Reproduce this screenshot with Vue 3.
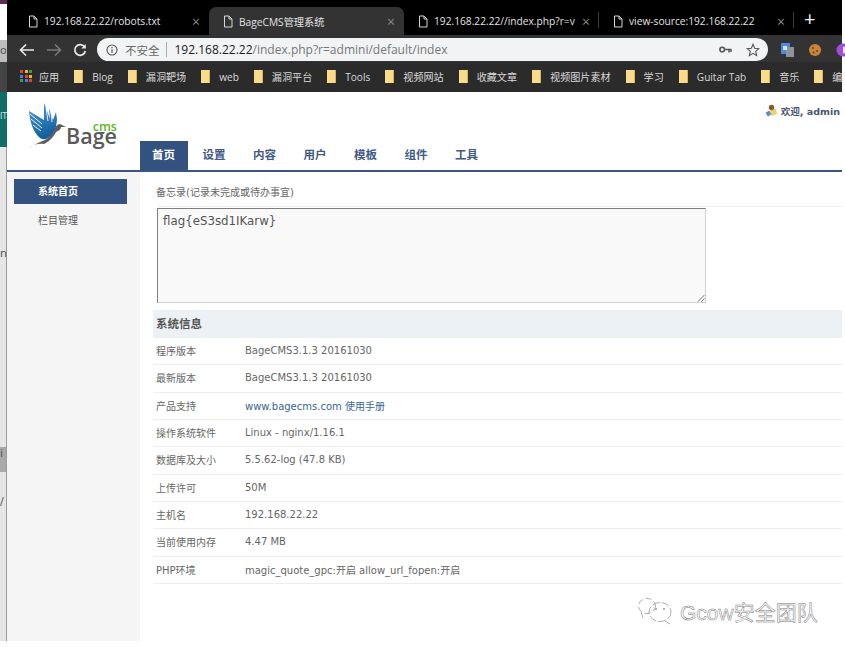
<template>
  <div class="shot">
    <!-- 左边露出的其他窗口 -->
    <div class="desk">
      <div class="desk-a"></div>
      <div class="desk-b"></div>
      <div class="desk-c">o</div>
      <div class="desk-d"></div>
      <div class="desk-e">IT</div>
      <div class="desk-f">
        <span class="desk-n">n</span>
        <span class="desk-g">i</span>
        <span class="desk-s">/</span>
      </div>
    </div>

    <div class="win">
      <!-- 标签栏 -->
      <div class="tabs">
        <div v-for="tab in tabs" :key="tab.title" class="tab" :class="{ active: tab.active }" :style="{ width: tab.width + 'px' }">
          <svg class="doc" width="12" height="13" viewBox="0 0 12 13">
            <path d="M2.5 1h4.5l3 3v8h-7.500z M7 1v3h3" fill="none" stroke="currentColor" stroke-width="1" />
          </svg>
          <span class="tab-title">{{ tab.title }}</span>
          <span class="tab-x">×</span>
        </div>
        <span class="plus">+</span>
      </div>

      <!-- 地址栏 -->
      <div class="toolbar">
        <svg class="nav-ico" width="16" height="14" viewBox="0 0 16 14"><path d="M15 7H2M7 1.500 1.500 7 7 12.500" fill="none" stroke="#e8eaed" stroke-width="1.600" /></svg>
        <svg class="nav-ico" width="16" height="14" viewBox="0 0 16 14"><path d="M1 7h13M9 1.500 14.500 7 9 12.500" fill="none" stroke="#77797c" stroke-width="1.600" /></svg>
        <svg class="nav-ico" width="14" height="14" viewBox="0 0 14 14"><path d="M11.500 4A5.300 5.300 0 1 0 12.300 8" fill="none" stroke="#e8eaed" stroke-width="1.700" /><path d="M12.800 1v4.500H8.300z" fill="#e8eaed" /></svg>
        <div class="omni">
          <svg width="12" height="12" viewBox="0 0 12 12"><circle cx="6" cy="6" r="5" fill="none" stroke="#555" stroke-width="1.100" /><path d="M6 5.200v3.600M6 3v1.200" stroke="#555" stroke-width="1.200" /></svg>
          <span class="insecure">不安全</span>
          <span class="sep"></span>
          <span class="url"><b>192.168.22.22</b>/index.php?r=admini/default/index</span>
          <svg class="key" width="13" height="8" viewBox="0 0 13 8"><circle cx="3.200" cy="3.500" r="2.300" fill="none" stroke="#555" stroke-width="1.600" /><path d="M5.500 3.500H12.500M10 3.500v3M12 3.500v2.500" stroke="#555" stroke-width="1.500" /></svg>
          <svg width="14" height="14" viewBox="0 0 14 14"><path d="M7 1.300 8.700 5.200 12.900 5.600 9.700 8.400 10.700 12.600 7 10.400 3.300 12.600 4.300 8.400 1.100 5.600 5.300 5.200z" fill="none" stroke="#555" stroke-width="1.100" /></svg>
        </div>
        <div class="exts">
          <svg width="14" height="14" viewBox="0 0 14 14"><rect x="1" y="0" width="9" height="11" fill="#4a8ae6" /><rect x="6" y="4" width="8" height="10" fill="#8d959c" /><rect x="3" y="3" width="4" height="4" fill="#d5e4fa" /></svg>
          <svg width="14" height="14" viewBox="0 0 14 14"><circle cx="7" cy="7" r="6" fill="#c9843a" /><circle cx="5" cy="5" r="1" fill="#6d421a" /><circle cx="9" cy="8" r="1" fill="#6d421a" /><circle cx="5.500" cy="9.500" r="1" fill="#6d421a" /></svg>
          <svg width="14" height="14" viewBox="0 0 14 14"><circle cx="7" cy="7" r="6.500" fill="#a14ee0" /><path d="M7 3.500a3.500 3.500 0 0 1 0 7z" fill="#f2e6fb" /></svg>
        </div>
      </div>

      <!-- 书签栏 -->
      <div class="bookmarks">
        <div class="bm">
          <span class="apps"><i v-for="c in appColors" :key="c.id" :style="{ background: c.color }"></i></span>
          <span>应用</span>
        </div>
        <div v-for="b in bookmarks" :key="b" class="bm">
          <span class="folder"></span>
          <span>{{ b }}</span>
        </div>
      </div>

      <!-- 后台页面 -->
      <div class="page">
        <div class="head">
          <div class="logo">
            <svg class="bird" width="40" height="50" viewBox="0 0 40 50">
              <defs>
                <linearGradient id="wing" x1="0" y1="0" x2="0.300" y2="1">
                  <stop offset="0" stop-color="#4b9bd8" />
                  <stop offset="1" stop-color="#14609f" />
                </linearGradient>
              </defs>
              <path d="M2 11C3 22 6 32 13 38C19 42 26 36 29 27L30 20L29 12L26 20L22 8L23 19L17 3L17 20Z" fill="url(#wing)" />
              <path d="M3 14 15 24M4 19 15 28M6 25 14 31M19 8 21 21M24 12 25 22" fill="none" stroke="#fff" stroke-width="0.900" />
              <path d="M1 49C6 44 12 43 17 44C23 41 27 36 29 32C32 31 34 29 34 27L39 27L33 24C30 24 29 27 28 28C26 35 20 40 13 42C8 44 4 47 1 49Z" fill="#5c5c5c" />
            </svg>
            <div class="brand">
              <span class="cms">cms</span>
              <span class="bage">Bage</span>
            </div>
          </div>
          <div class="head-right">
            <div class="welcome">
              <svg width="13" height="13" viewBox="0 0 13 13">
                <path d="M5 5h6l1 5-6 2z" fill="#f0cf6a" />
                <circle cx="6.500" cy="3.500" r="2.700" fill="#8a5a2e" />
                <path d="M0.500 9 4 6.500 6.500 10 3 12.800z" fill="#5d8fc9" />
              </svg>
              <span>欢迎, <span class="admin">admin</span></span>
            </div>
            <div class="nav">
              <a v-for="(n, i) in navs" :key="n" class="nav-item" :class="{ on: i === 0 }">{{ n }}</a>
            </div>
          </div>
        </div>

        <div class="body">
          <div class="side">
            <div class="side-item on">系统首页</div>
            <div class="side-item">栏目管理</div>
          </div>
          <div class="main">
            <div class="memo-label">备忘录(记录未完成或待办事宜)</div>
            <div class="memo-line"></div>
            <div class="memo">flag{eS3sd1IKarw}
              <svg class="grip" width="8" height="8" viewBox="0 0 8 8"><path d="M7.500 1 1 7.500M7.500 4.500 4.500 7.500" stroke="#777" stroke-width="1" /></svg>
            </div>
            <div class="info-title">系统信息</div>
            <div v-for="row in rows" :key="row.label" class="info-row">
              <span class="info-label">{{ row.label }}</span>
              <span class="info-value" :class="{ link: row.link }">{{ row.value }}</span>
            </div>
          </div>
        </div>
      </div>

      <!-- 水印 -->
      <div class="mark">
        <svg width="36" height="28" viewBox="0 0 36 28">
          <g fill="none" stroke="#999" stroke-width="0.800">
            <ellipse cx="10" cy="9" rx="8.500" ry="7.500" stroke-dasharray="6 3" />
            <ellipse cx="23" cy="15" rx="11" ry="9.500" stroke-dasharray="8 2" />
            <path d="M4 15 6 21M28 24 33 27" />
          </g>
          <circle cx="19" cy="12" r="1" fill="#999" />
          <circle cx="27" cy="12" r="1" fill="#999" />
        </svg>
        <span>Gcow安全团队</span>
      </div>
    </div>
    <div class="edge"></div>
  </div>
</template>

<script setup>
const tabs = [
  { title: '192.168.22.22/robots.txt', width: 195 },
  { title: 'BageCMS管理系统', width: 195, active: true },
  { title: '192.168.22.22//index.php?r=v', width: 195 },
  { title: 'view-source:192.168.22.22', width: 195 }
]

const appColors = [
  '#e0452f', '#f2b632', '#3f9b4a',
  '#4a7fe0', '#e0452f', '#f2b632',
  '#3f9b4a', '#4a7fe0', '#e0452f'
].map((color, id) => ({ id, color }))

const bookmarks = ['Blog', '漏洞靶场', 'web', '漏洞平台', 'Tools', '视频网站', '收藏文章', '视频图片素材', '学习', 'Guitar Tab', '音乐', '编']

const navs = ['首页', '设置', '内容', '用户', '模板', '组件', '工具']

const rows = [
  { label: '程序版本', value: 'BageCMS3.1.3 20161030' },
  { label: '最新版本', value: 'BageCMS3.1.3 20161030' },
  { label: '产品支持', value: 'www.bagecms.com 使用手册', link: true },
  { label: '操作系统软件', value: 'Linux - nginx/1.16.1' },
  { label: '数据库及大小', value: '5.5.62-log (47.8 KB)' },
  { label: '上传许可', value: '50M' },
  { label: '主机名', value: '192.168.22.22' },
  { label: '当前使用内存', value: '4.47 MB' },
  { label: 'PHP环境', value: 'magic_quote_gpc:开启 allow_url_fopen:开启' }
]
</script>

<style>
html, body {
  margin: 0;
  background: #fff;
}
</style>

<style scoped>
.shot {
  display: flex;
  width: 845px;
  height: 647px;
  overflow: hidden;
  background: #fff;
  font-family: "DejaVu Sans", "Noto Sans CJK SC", sans-serif;
}

/* 左边缘 */
.desk {
  width: 7px;
  height: 641px;
  flex: none;
  display: flex;
  flex-direction: column;
  overflow: hidden;
  font-size: 11px;
  color: #555;
}
.desk-a { height: 4px; background: #5a2d4d; }
.desk-b { height: 36px; background: #fff; }
.desk-c { height: 22px; background: #bdbdbd; line-height: 22px; }
.desk-d { height: 30px; background: #444; }
.desk-e { height: 55px; background: #0f6f68; color: #cfe5e2; font-size: 8px; line-height: 50px; }
.desk-f {
  flex: 1;
  position: relative;
  background: #e6e6e6;
  border-right: 1px solid #9a9a9a;
}
.desk-n { position: absolute; left: 0; top: 100px; }
.desk-g {
  position: absolute;
  left: 0;
  top: 300px;
  width: 6px;
  height: 25px;
  background: #a9a9a9;
}
.desk-s { position: absolute; left: 0; top: 348px; }

.win {
  position: relative;
  width: 835px;
  height: 641px;
  flex: none;
  display: flex;
  flex-direction: column;
}
.edge {
  flex: 1;
  background: #fff;
}

/* 标签栏 */
.tabs {
  height: 35px;
  padding-top: 7px;
  box-sizing: border-box;
  flex: none;
  background: #000;
  display: flex;
  padding-left: 7px;
  font-family: "Open Sans", "Noto Sans CJK SC", sans-serif;
  font-size: 10.200px;
  color: #e3e3e3;
}
.tab {
  display: flex;
  align-items: center;
  box-sizing: border-box;
  padding: 0 7px 0 7px;
  flex: none;
  position: relative;
}
.tab.active {
  background: #333;
  border-radius: 7px 7px 0 0;
}
.tab:nth-child(3)::after,
.tab:nth-child(4)::after {
  content: "";
  position: absolute;
  right: 0;
  top: 5px;
  bottom: 7px;
  width: 1px;
  background: #3c3c3c;
}
.doc {
  flex: none;
  margin-left: 6px;
  color: #d8d8d8;
}
.tab-title {
  margin-left: 5px;
  flex: 1;
  overflow: hidden;
  white-space: nowrap;
}
.tab-x {
  flex: none;
  width: 10px;
  font-size: 14px;
  color: #8a8a8a;
}
.plus {
  margin-left: 10px;
  font-size: 20px;
  line-height: 24px;
  color: #f2f2f2;
}

/* 地址栏 */
.toolbar {
  height: 27px;
  flex: none;
  background: #333;
  display: flex;
  align-items: center;
  padding: 2px 0 0 12px;
  box-sizing: border-box;
  gap: 11px;
}
.nav-ico {
  flex: none;
}
.omni {
  width: 671px;
  height: 23px;
  flex: none;
  margin-left: -1px;
  border-radius: 12px;
  background: #f1f3f4;
  display: flex;
  align-items: center;
  padding: 0 8px 0 9px;
  box-sizing: border-box;
  font-family: "Open Sans", "Noto Sans CJK SC", sans-serif;
  color: #777;
}
.insecure {
  margin-left: 7px;
  font-size: 11.500px;
  color: #666;
}
.sep {
  width: 1px;
  height: 15px;
  margin: 0 8px 0 6px;
  background: #aaa;
}
.url {
  flex: 1;
  font-size: 12px;
  white-space: nowrap;
}
.url b {
  font-weight: 400;
  color: #222;
}
.key {
  margin-right: 14px;
}
.exts {
  display: flex;
  gap: 14px;
  margin-left: 1px;
}

/* 书签栏 */
.bookmarks {
  height: 30px;
  flex: none;
  background: #2b2b2b;
  display: flex;
  align-items: center;
  padding: 0 0 1px 14px;
  box-sizing: border-box;
  gap: 15px;
  overflow: hidden;
  white-space: nowrap;
  font-family: "Open Sans", "Noto Sans CJK SC", sans-serif;
  font-size: 10.100px;
  color: #d9d9d9;
}
.bm {
  display: flex;
  align-items: center;
  gap: 9px;
  flex: none;
}
.apps {
  width: 12px;
  height: 13px;
  margin: 0 -2px 0 -1px;
  display: grid;
  grid-template-columns: repeat(3, 3px);
  grid-auto-rows: 3px;
  gap: 1.500px;
}
.folder {
  width: 9px;
  height: 13px;
  background: #f9dc8a;
  border-right: 1px solid #d3b25e;
  box-sizing: border-box;
}

/* 页面 */
.page {
  flex: 1;
  display: flex;
  flex-direction: column;
  min-height: 0;
  background: #fff;
}
.head {
  flex: none;
  display: flex;
  border-bottom: 2px solid #3a5583;
  box-sizing: content-box;
  margin-bottom: -2px;
  height: 78px;
}
.logo {
  width: 133px;
  flex: none;
  display: flex;
  padding: 8px 0 0 20px;
  box-sizing: border-box;
}
.bird {
  flex: none;
}
.brand {
  display: flex;
  flex-direction: column;
  align-items: flex-end;
  margin: 21px 0 0 -1px;
  font-family: "Open Sans", sans-serif;
  line-height: 1;
}
.cms {
  font-size: 12.500px;
  font-weight: 600;
  color: #58b81c;
  margin-bottom: -8.500px;
}
.bage {
  font-size: 21.500px;
  font-weight: 600;
  color: #5a5a5a;
}
.head-right {
  flex: 1;
  display: flex;
  flex-direction: column;
}
.welcome {
  height: 49px;
  flex: none;
  display: flex;
  align-items: flex-start;
  justify-content: flex-end;
  gap: 3px;
  padding: 12px 2px 0 0;
  box-sizing: border-box;
  font-size: 9.600px;
  font-weight: 700;
  color: #4a5370;
}
.admin {
  font-size: 9.500px;
}
.nav {
  flex: 1;
  display: flex;
  font-size: 11.500px;
  font-weight: 700;
}
.nav-item {
  width: 50.500px;
  flex: none;
  box-sizing: border-box;
  padding-left: 12px;
  line-height: 29px;
  color: #3f5a85;
}
.nav-item.on {
  width: 48px;
  margin-right: 2.500px;
  background: #34527f;
  color: #fff;
}

.body {
  flex: 1;
  display: flex;
  min-height: 0;
  margin-top: 2px;
}
.side {
  width: 133px;
  flex: none;
  background: #f5f5f5;
  padding: 7px 13px 0 7px;
  box-sizing: border-box;
  font-size: 10px;
  color: #555;
}
.side-item {
  height: 25px;
  line-height: 26px;
  padding-left: 24px;
  margin-bottom: 4px;
}
.side-item.on {
  background: #34527f;
  color: #fff;
  font-weight: 700;
}
.main {
  flex: 1;
  min-width: 0;
  padding: 14px 0 0 13px;
  box-sizing: border-box;
  overflow: hidden;
}
.memo-label {
  height: 20px;
  padding-left: 3px;
  font-size: 10px;
  line-height: 13px;
  color: #666;
}
.memo-line {
  height: 1px;
  background: #efefef;
  margin-left: 4px;
}
.memo {
  position: relative;
  width: 549px;
  height: 95px;
  margin: 1px 0 7px 4px;
  box-sizing: border-box;
  background: #f9f9f9;
  border: 1px solid #d0d0d0;
  border-top-color: #808080;
  border-left-color: #808080;
  padding: 5px 5px;
  font-size: 11.800px;
  line-height: 14px;
  color: #555;
}
.grip {
  position: absolute;
  right: 0;
  bottom: 0;
}
.info-title {
  height: 28px;
  line-height: 28px;
  padding-left: 3px;
  background: #ecf1f5;
  font-size: 11.500px;
  font-weight: 700;
  color: #555;
}
.info-row {
  height: 27.330px;
  box-sizing: border-box;
  display: flex;
  align-items: center;
  padding: 0 0 1px 3px;
  border-bottom: 1px solid #ededed;
  font-size: 10px;
  color: #666;
}
.info-label {
  width: 89px;
  flex: none;
}
.link {
  color: #3a6496;
}

/* 水印 */
.mark {
  position: absolute;
  left: 630px;
  top: 596px;
  display: flex;
  align-items: center;
  gap: 7px;
  font-family: "Liberation Sans", "Noto Sans CJK SC", sans-serif;
  font-size: 21px;
  color: #fff;
  -webkit-text-stroke: 0.5px #777;
}
</style>
